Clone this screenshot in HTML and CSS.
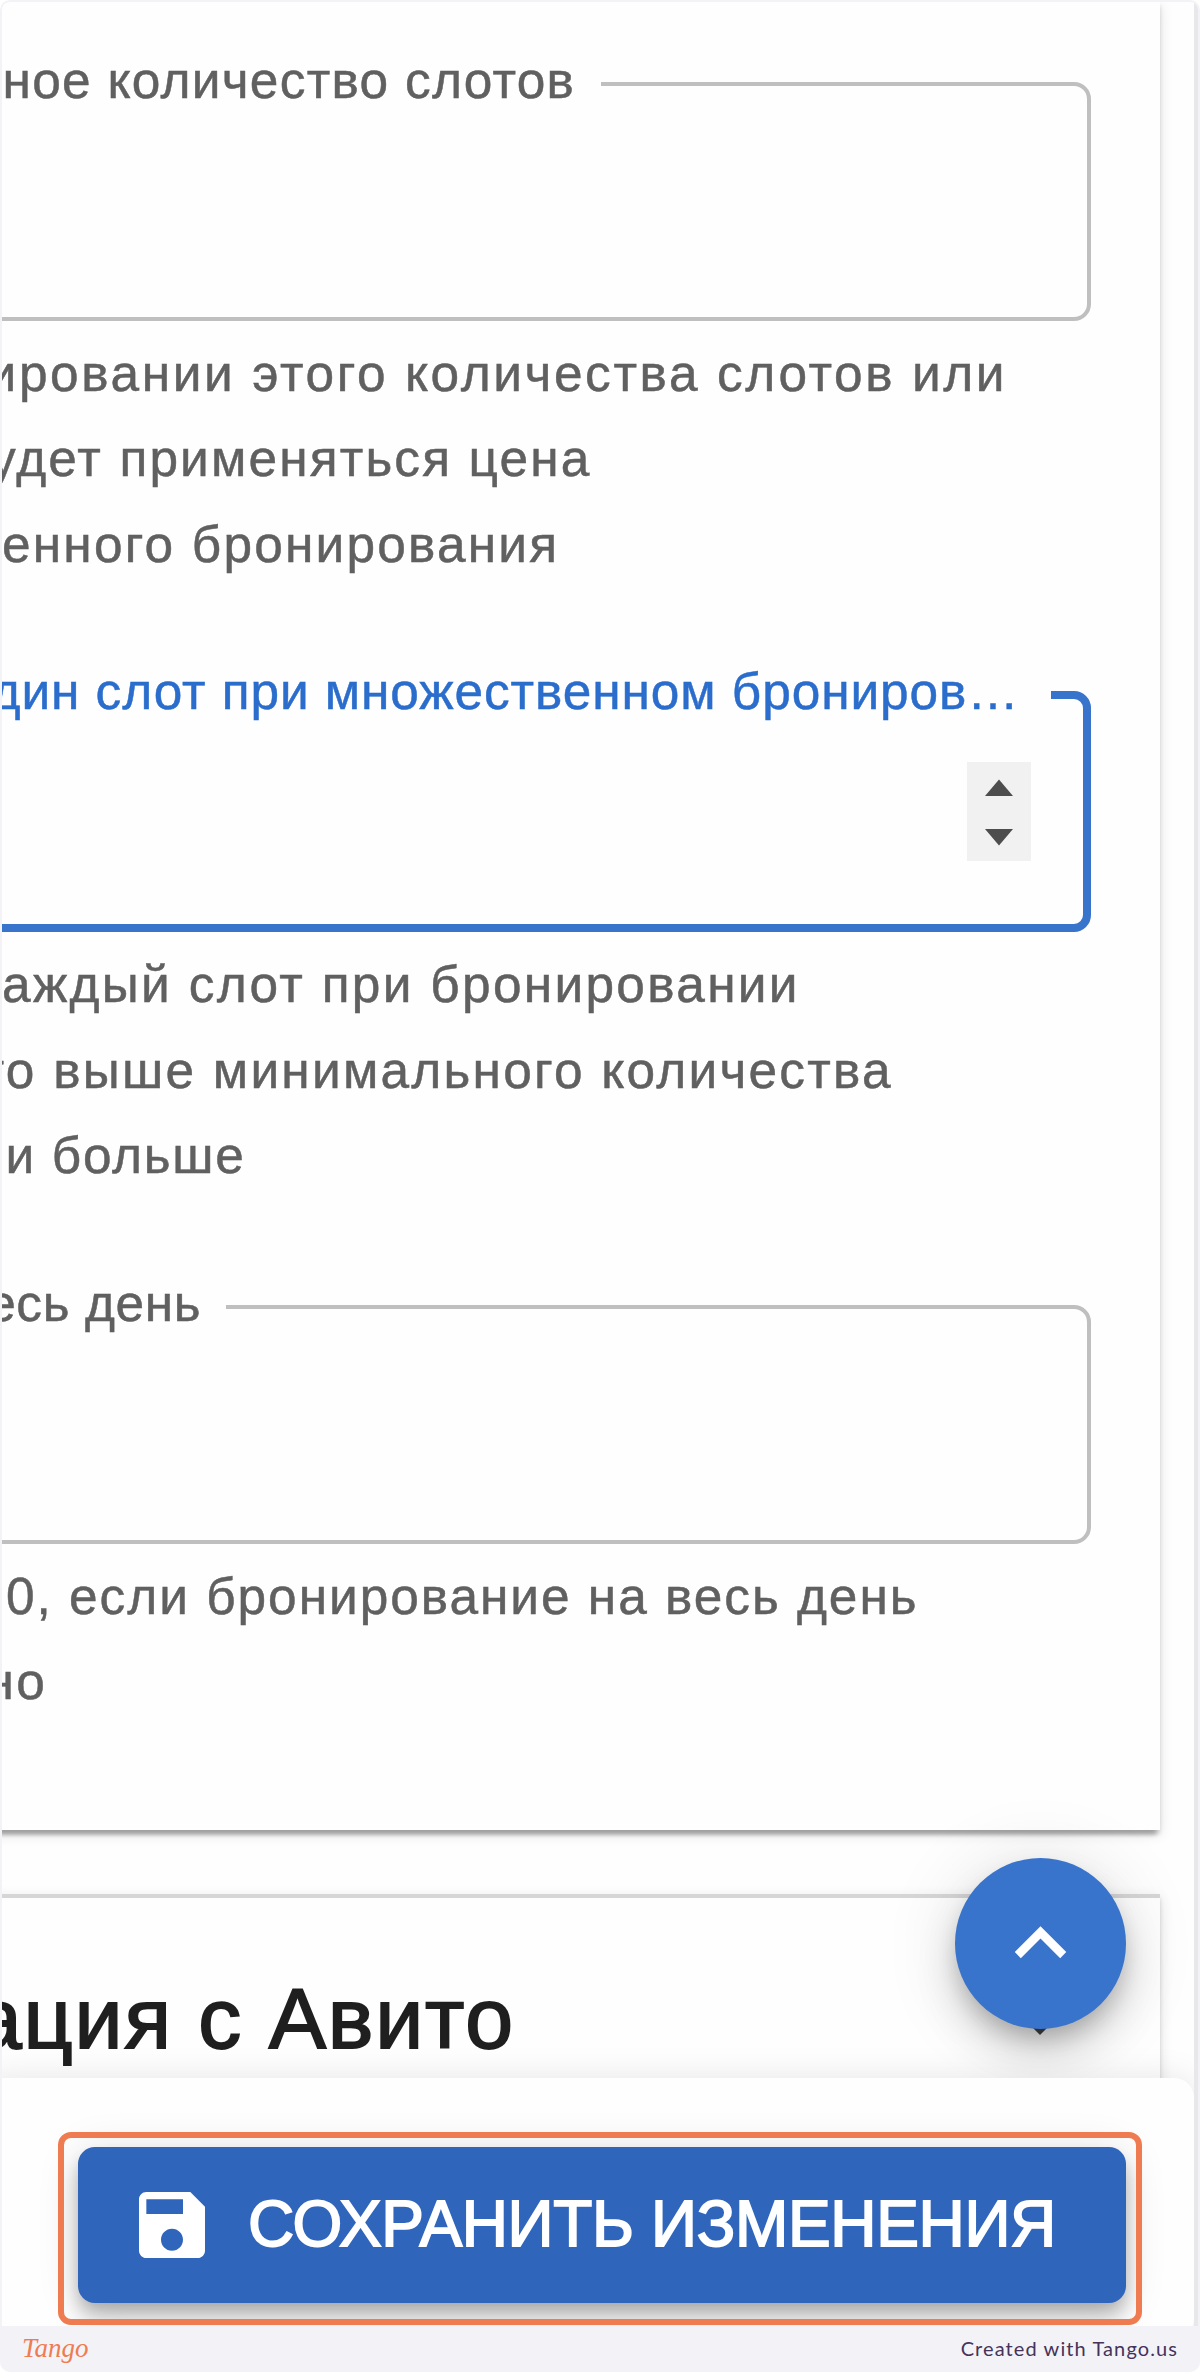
FILE: index.html
```
<!DOCTYPE html>
<html lang="ru">
<head>
    <meta charset="UTF-8">
    <title>Настройки</title>
    <link rel="stylesheet" href="styles.css">
</head>
<body>
    <div class="shot">
        <!-- Карточка с ценами -->
        <div class="card">
            <div class="field">
                <fieldset class="outline">
                    <legend class="label label-slots">ьное количество слотов</legend>
                </fieldset>
                <div class="helper">
                    <div class="line line-1">ировании этого количества слотов или</div>
                    <div class="line line-2">удет применяться цена</div>
                    <div class="line line-3">енного бронирования</div>
                </div>
            </div>

            <div class="field">
                <fieldset class="outline focused">
                    <legend class="label label-price">дин слот при множественном брониров…</legend>
                    <div class="input-row">
                        <div class="spinner">
                            <svg viewBox="0 0 64 99">
                                <path d="M18 34L32 17.500L46 34z"/>
                                <path d="M18 67L32 83.500L46 67z"/>
                            </svg>
                        </div>
                    </div>
                </fieldset>
                <div class="helper">
                    <div class="line line-4">аждый слот при бронировании</div>
                    <div class="line line-5">го выше минимального количества</div>
                    <div class="line line-6">и больше</div>
                </div>
            </div>

            <div class="field">
                <fieldset class="outline">
                    <legend class="label label-day">есь день</legend>
                </fieldset>
                <div class="helper">
                    <div class="line line-7">0, если бронирование на весь день</div>
                    <div class="line line-8">но</div>
                </div>
            </div>
        </div>

        <!-- Интеграция -->
        <div class="card accordion">
            <h2 class="title">ация с Авито</h2>
            <svg class="expand" viewBox="0 0 24 12"><path d="M0 0h24L12 12z"/></svg>
        </div>

        <button class="fab">
            <svg viewBox="0 0 24 24"><path d="M7.41 15.41L12 10.83l4.59 4.580L18 14l-6-6-6 6z"/></svg>
        </button>

        <!-- Нижняя панель -->
        <div class="bottom-bar">
            <button class="save">
                <svg viewBox="0 0 24 24"><path d="M17 3H5c-1.110 0-2 .9-2 2v14c0 1.100.89 2 2 2h14c1.100 0 2-.9 2-2V7l-4-4zm-5 16c-1.660 0-3-1.340-3-3s1.340-3 3-3 3 1.340 3 3-1.340 3-3 3zm3-10H5V5h10v4z"/></svg>
                <span>СОХРАНИТЬ ИЗМЕНЕНИЯ</span>
            </button>
        </div>
        <div class="highlight"></div>
    </div>

    <div class="footer">
        <span class="logo">Tango</span>
        <span class="credit">Created with Tango.us</span>
    </div>
</body>
</html>
```

FILE: styles.css
```
* {
    margin: 0;
    padding: 0;
    box-sizing: border-box;
}

body {
    width: 1200px;
    height: 2372px;
    overflow: hidden;
    background: #fff;
    font-family: "Liberation Sans", Arial, sans-serif;
}

.shot {
    position: relative;
    height: 2326px;
    border: 2px solid #f3f2f7;
    border-bottom: none;
    border-radius: 10px 10px 0 0;
    overflow: hidden;
    background: #fefefe;
}

/* полоса у правого края */
.shot::after {
    content: "";
    position: absolute;
    top: 0;
    right: 0;
    width: 4px;
    height: 100%;
    background: #e8e8ea;
}

.card {
    width: 1178px;
    height: 1828px;
    margin-left: -20px;
    padding: 51.500px 69px 0 20px;
    background: #fefefe;
    box-shadow: 0 9px 4px -4px rgba(0, 0, 0, 0.2),
                0 4px 4px 0 rgba(0, 0, 0, 0.14),
                0 4px 13px 0 rgba(0, 0, 0, 0.12);
}

.field {
    margin-bottom: 78px;
}

/* Поля */
.outline {
    height: 267.400px;
    margin-left: -40px;
    border: 4px solid #bfbfbf;
    border-radius: 17px;
}

.outline.focused {
    border: 8px solid #3874cb;
}

.label {
    height: 60px;
    padding-right: 26px;
    font-size: 51.400px;
    line-height: 52px;
    letter-spacing: 1.280px;
    white-space: nowrap;
    color: #606060;
    -webkit-text-stroke: 0.500px #606060;
}

.label-slots {
    margin-left: 8.500px;
}

.label-price {
    margin-left: 20.500px;
    padding-right: 31px;
    letter-spacing: 0.920px;
    color: #2a6dcc;
    -webkit-text-stroke: 0.500px #2a6dcc;
}

.label-day {
    margin-left: 21.200px;
    padding-right: 25px;
    letter-spacing: 0.600px;
}

.input-row {
    display: flex;
    justify-content: flex-end;
    padding: 37px 52px 0 0;
}

.spinner {
    width: 64px;
    height: 99px;
    background: #f1f1f1;
}

.spinner svg {
    display: block;
    fill: #4d4d4d;
}

.helper {
    margin-top: 10px;
    min-height: 256px;
}

.line {
    height: 85.400px;
    font-size: 51.400px;
    line-height: 85.400px;
    letter-spacing: 2.300px;
    white-space: nowrap;
    color: #606060;
    -webkit-text-stroke: 0.500px #606060;
}

.line-1 {
    margin-left: -14.400px;
    letter-spacing: 2.600px;
}

.line-2 {
    margin-left: -12px;
    letter-spacing: 2.150px;
}

.line-3 {
    margin-left: 0;
    letter-spacing: 2.200px;
}

.line-4 {
    margin-left: 0;
}

.line-5 {
    margin-left: -16px;
    letter-spacing: 2.250px;
}

.line-6 {
    margin-left: 3.400px;
    letter-spacing: 1.700px;
}

.line-7 {
    margin-left: 4px;
    letter-spacing: 1.970px;
}

.line-8 {
    margin-left: -16.400px;
}

/* Аккордеон */
.accordion {
    position: relative;
    height: 500px;
    margin-top: 64px;
    padding-top: 70px;
    border-top: 4px solid #d6d6d6;
}

.title {
    margin-left: -28px;
    font-size: 86px;
    font-weight: 400;
    line-height: 100px;
    letter-spacing: 1.750px;
    white-space: nowrap;
    color: #1f1f1f;
    -webkit-text-stroke: 1.800px #1f1f1f;
}

.expand {
    position: absolute;
    top: 125px;
    left: 1046px;
    width: 24px;
    height: 12px;
    fill: #444;
}

.fab {
    position: absolute;
    top: 1855.500px;
    left: 952.500px;
    width: 171px;
    height: 171px;
    display: flex;
    align-items: center;
    justify-content: center;
    border: none;
    border-radius: 50%;
    background: #3874cb;
    box-shadow: 0 13px 21px -4px rgba(0, 0, 0, 0.2),
                0 26px 43px 0 rgba(0, 0, 0, 0.14),
                0 4px 77px 0 rgba(0, 0, 0, 0.12);
}

.fab svg {
    width: 103px;
    height: 103px;
    fill: #fff;
}

/* Нижняя панель */
.bottom-bar {
    position: absolute;
    top: 2076px;
    left: -20px;
    right: 4px;
    height: 260px;
    padding: 69px 68px 0 96px;
    border-radius: 20px;
    background: #fefefe;
    box-shadow: 0 0 34px rgba(0, 0, 0, 0.1);
}

.save {
    display: flex;
    align-items: center;
    width: 1048px;
    height: 156px;
    padding-left: 50px;
    border: none;
    border-radius: 17px;
    background: #2f65bb;
    color: #fff;
    box-shadow: 0 9px 17px -4px rgba(0, 0, 0, 0.2),
                0 17px 21px 0 rgba(0, 0, 0, 0.14),
                0 4px 43px 0 rgba(0, 0, 0, 0.12);
}

.save svg {
    width: 88px;
    height: 88px;
    margin-right: 32px;
    fill: #fff;
}

.save span {
    padding-bottom: 2px;
    font-family: "Liberation Sans", Arial, sans-serif;
    font-size: 64px;
    letter-spacing: -0.350px;
    white-space: nowrap;
    -webkit-text-stroke: 1.800px #fff;
}

.highlight {
    position: absolute;
    top: 2130px;
    left: 56px;
    width: 1084px;
    height: 193px;
    border: 6px solid #ef7c50;
    border-radius: 13px;
}

.footer {
    display: flex;
    align-items: center;
    justify-content: space-between;
    height: 46px;
    padding: 0 22px 2px 22px;
    border-radius: 0 0 10px 10px;
    background: #f3f2f7;
}

.logo {
    font-family: "Liberation Serif", serif;
    font-size: 27px;
    font-style: italic;
    color: #ef7c50;
}

.credit {
    font-family: Lato, sans-serif;
    font-size: 20px;
    letter-spacing: 1.100px;
    color: #45335a;
}
```
